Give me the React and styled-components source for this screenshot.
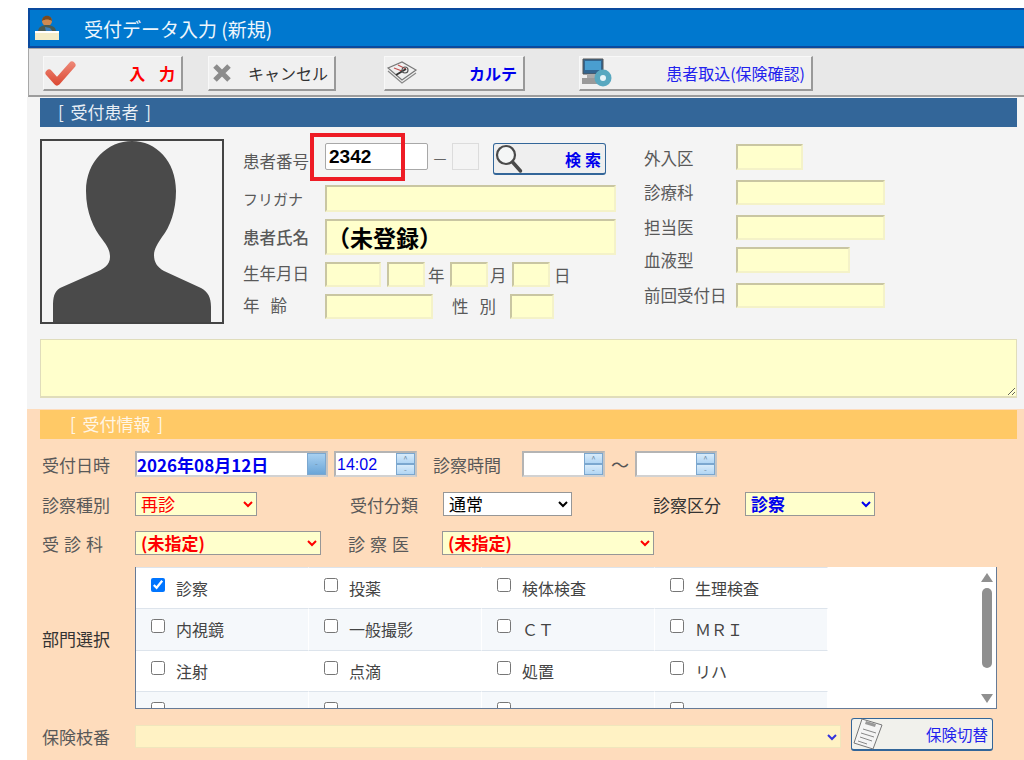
import React from "react";
import styled, { createGlobalStyle } from "styled-components";

const CJK = `"Noto Sans CJK JP", "Noto Sans", sans-serif`;

const GlobalStyle = createGlobalStyle`
  html, body {
    margin: 0;
    padding: 0;
    background: #fff;
    overflow: hidden;
  }
  body {
    font-family: ${CJK};
  }
`;

const Page = styled.div`
  width: 1024px;
  height: 760px;
  box-sizing: border-box;
  padding: 8px 0 0 28px;
  overflow: hidden;
`;

const TitleBar = styled.div`
  display: flex;
  align-items: center;
  height: 40px;
  box-sizing: border-box;
  background: #0078cf;
  border: 2px solid #0a4a9e;
  border-right: none;
  color: #eef6fc;
  font-size: 19px;
  padding-left: 4px;
`;

const TitleText = styled.span`
  margin-left: 24px;
  margin-top: 1px;
`;

const Toolbar = styled.div`
  display: flex;
  align-items: flex-start;
  height: 49px;
  box-sizing: border-box;
  padding: 7px 0 0 14px;
  background: #e8e8e8;
  border-top: 1px solid #a8a8a8;
  border-bottom: 2px solid #9c9c9c;
  border-left: 1px solid #a8a8a8;
`;

const ToolButton = styled.div`
  display: flex;
  align-items: center;
  justify-content: space-between;
  width: ${(p) => p.$w}px;
  height: 35px;
  box-sizing: border-box;
  margin-left: ${(p) => p.$ml || 0}px;
  padding: 0 6px 0 1px;
  background: #f0f0f0;
  border: 1px solid #f8f8f8;
  border-right: 2px solid #999;
  border-bottom: 2px solid #999;
  color: ${(p) => p.$color};
  font-size: 16px;
  font-weight: ${(p) => (p.$bold ? 700 : 400)};
  word-spacing: ${(p) => p.$wordGap || 0}px;
  white-space: nowrap;
`;

const PatientPanel = styled.div`
  margin-left: -1px;
  height: 312px;
  box-sizing: border-box;
  padding: 1px 7px 0 13px;
  background: #f4f4f4;
`;

const SectionHeader = styled.div`
  height: 29px;
  box-sizing: border-box;
  padding-bottom: 2px;
  display: flex;
  align-items: center;
  background: ${(p) => p.$bg};
  color: ${(p) => p.$color};
  font-size: 17px;
  word-spacing: 3px;
  padding-left: ${(p) => p.$pl}px;
  white-space: pre;
`;

const PatientBody = styled.div`
  display: flex;
  margin-top: 12px;
`;

const Photo = styled.div`
  width: 184px;
  height: 185px;
  box-sizing: border-box;
  border: 2px solid #444;
  background: #f4f4f4;
  flex: none;
  overflow: hidden;
  line-height: 0;
`;

const MainFields = styled.div`
  width: 401px;
  margin-left: 19px;
  flex: none;
`;

const SideFields = styled.div`
  flex: none;
`;

const Row = styled.div`
  display: flex;
  align-items: ${(p) => p.$align || "center"};
  height: ${(p) => p.$h}px;
  margin-top: ${(p) => p.$mt || 0}px;
`;

const Label = styled.span`
  display: inline-block;
  width: ${(p) => p.$w}px;
  margin-left: ${(p) => p.$ml || 0}px;
  margin-top: ${(p) => p.$top || 0}px;
  flex: none;
  font-size: ${(p) => p.$size || 16.5}px;
  color: ${(p) => p.$color || "#595959"};
  font-weight: ${(p) => (p.$bold ? 500 : 400)};
  letter-spacing: ${(p) => p.$spacing || 0}px;
  white-space: pre;
  line-height: 1;
`;

const YellowBox = styled.input`
  width: ${(p) => p.$w}px;
  height: ${(p) => p.$h || 25}px;
  margin-left: ${(p) => p.$ml || 0}px;
  box-sizing: border-box;
  flex: none;
  padding: 0;
  background: #ffffcc;
  border: 2px solid #f4f2c8;
  border-top-color: #c9c6a2;
  border-left-color: #c9c6a2;
  color: #000;
  font-family: ${CJK};
  font-size: ${(p) => p.$size || 16}px;
  font-weight: 700;
  outline: none;
`;

const NumberWrap = styled.div`
  position: relative;
  flex: none;
  line-height: 0;
`;

const NumberInput = styled.input`
  width: 103px;
  height: 27px;
  box-sizing: border-box;
  padding: 0 0 0 3px;
  background: #fff;
  border: 1px solid #a8a8a8;
  border-radius: 2px;
  color: #000;
  font-family: "Liberation Sans", Arial, sans-serif;
  font-size: 19px;
  font-weight: 700;
  outline: none;
`;

const Highlight = styled.div`
  position: absolute;
  left: -15px;
  top: -10px;
  width: 95px;
  height: 48px;
  box-sizing: border-box;
  border: 4px solid #ee1c25;
`;

const Dash = styled.span`
  width: 24px;
  flex: none;
  text-align: center;
  color: #666;
  font-size: 16px;
  line-height: 30px;
`;

const SubInput = styled.div`
  width: 27px;
  height: 27px;
  box-sizing: border-box;
  flex: none;
  background: #f4f4f4;
  border: 1px solid #dcdcdc;
`;

const SearchButton = styled.div`
  display: flex;
  align-items: center;
  justify-content: space-between;
  width: 113px;
  height: 32px;
  margin-left: 14px;
  box-sizing: border-box;
  flex: none;
  padding: 0 0 0 1px;
  background: #efefef;
  border: 1px solid #336699;
  border-bottom-width: 2px;
  border-radius: 3px;
  color: #0000ee;
  font-size: 16px;
  font-weight: 700;
  letter-spacing: 4px;
`;

const Notes = styled.textarea`
  display: block;
  width: 977px;
  height: 59px;
  margin-top: 15px;
  box-sizing: border-box;
  background: #ffffcc;
  border: 1px solid #e0ddbb;
  border-bottom-width: 2px;
  outline: none;
  resize: vertical;
`;

const ReceptionPanel = styled.div`
  margin-left: -1px;
  height: 352px;
  box-sizing: border-box;
  padding: 1px 7px 0 13px;
  background: #fedcbc;
`;

const FormRow = styled.div`
  display: flex;
  align-items: ${(p) => p.$align || "center"};
  height: ${(p) => p.$h}px;
  margin-top: ${(p) => p.$mt}px;
  margin-left: 2px;
`;

const Field = styled.div`
  display: flex;
  width: ${(p) => p.$w}px;
  height: 26px;
  margin-left: ${(p) => p.$ml || 0}px;
  box-sizing: border-box;
  flex: none;
  background: #fff;
  border: 2px solid #b4b4b4;
  border-right-color: #c4c4c4;
  border-bottom-color: #d2d2d2;
`;

const FieldText = styled.span`
  flex: 1;
  padding-left: ${(p) => p.$pl || 0}px;
  color: #0000ee;
  font-family: ${(p) => (p.$bold ? CJK : `"Liberation Sans", Arial, sans-serif`)};
  font-size: ${(p) => (p.$bold ? 17 : 16)}px;
  font-weight: ${(p) => (p.$bold ? 700 : 400)};
  line-height: 24px;
  white-space: nowrap;
`;

const SpinColumn = styled.div`
  display: flex;
  flex-direction: column;
  width: 19px;
  flex: none;
`;

const SpinPart = styled.div`
  flex: 1;
  display: flex;
  align-items: center;
  justify-content: center;
  background: ${(p) => (p.$dark ? "linear-gradient(#a8d0f0, #6ba6d8)" : "linear-gradient(#d8ebfa, #b2d6f4)")};
  border: 1px solid #7ba7cf;
  color: #6f8ba5;
  font-size: 8px;
  line-height: 1;
`;

const Tilde = styled.span`
  width: 30px;
  text-align: center;
  flex: none;
  color: #555;
  font-size: 18px;
`;

/* the frame clips a taller select, Noto's line box does not fit in 24px */
const PickerFrame = styled.div`
  display: flex;
  align-items: center;
  width: ${(p) => p.$w}px;
  height: ${(p) => p.$h || 24}px;
  margin-left: ${(p) => p.$ml || 0}px;
  margin-top: ${(p) => p.$top || 0}px;
  box-sizing: border-box;
  flex: none;
  overflow: hidden;
  background-color: ${(p) => p.$bg || "#ffffcc"};
  border: 1px solid ${(p) => p.$border || "#979797"};
`;

const Picker = styled.select`
  width: 100%;
  height: 32px;
  flex: none;
  margin: 0;
  padding: 0 0 2px 1px;
  background: transparent;
  border: none;
  color: ${(p) => p.$color || "#ff0000"};
  font-family: ${CJK};
  font-size: 17px;
  font-weight: ${(p) => (p.$bold ? 700 : 400)};
  outline: none;
`;

const ListBox = styled.div`
  display: flex;
  justify-content: space-between;
  width: 862px;
  height: 142px;
  box-sizing: border-box;
  background: #fff;
  border-left: 1px solid #667a96;
  border-right: 1px solid #667a96;
  border-bottom: 1px solid #667a96;
  overflow: hidden;
`;

const ListGrid = styled.div`
  display: grid;
  grid-template-columns: repeat(4, 173px);
  grid-auto-rows: 41.4px;
  width: 692px;
  flex: none;
`;

const ListCell = styled.label`
  display: flex;
  align-items: flex-start;
  box-sizing: border-box;
  padding: 10px 0 0 15px;
  background: ${(p) => (p.$alt ? "#f5f8fb" : "#fff")};
  border-top: 1px solid #dde4ec;
  border-right: 1px solid #fff;
  color: #444;
  font-size: 16px;
  line-height: 1;
`;

const CellCheck = styled.input`
  width: 14px;
  height: 14px;
  margin: 0 11px 0 0;
  flex: none;
`;

const CellText = styled.span`
  margin-top: 2px;
`;

const ScrollTrack = styled.div`
  display: flex;
  flex-direction: column;
  align-items: center;
  width: 14px;
  margin-right: 2px;
  padding-top: 6px;
  flex: none;
`;

const ScrollArrow = styled.div`
  width: 0;
  height: 0;
  border-left: 6px solid transparent;
  border-right: 6px solid transparent;
  ${(p) => (p.$down ? "border-top: 9px solid #909090;" : "border-bottom: 9px solid #909090;")}
`;

const ScrollThumb = styled.div`
  width: 10px;
  height: 80px;
  margin: 6px 0 26px;
  border-radius: 5px;
  background: #8f8f8f;
`;

const SwapButton = styled.div`
  display: flex;
  align-items: center;
  justify-content: space-between;
  width: 142px;
  height: 33px;
  margin-left: 10px;
  box-sizing: border-box;
  flex: none;
  padding: 0 4px 0 1px;
  background: #f1f1ec;
  border: 1px solid #336699;
  border-bottom-width: 2px;
  border-radius: 3px;
  color: #1f1fee;
  font-size: 15.5px;
`;

function Dropdown({ w, h, ml, top, bg, border, color, bold, value }) {
  return (
    <PickerFrame $w={w} $h={h} $ml={ml} $top={top} $bg={bg} $border={border}>
      <Picker $color={color} $bold={bold} value={value} onChange={() => {}}>
        <option>{value}</option>
      </Picker>
    </PickerFrame>
  );
}

function ReceptionIcon() {
  return (
    <svg width="26" height="26" viewBox="0 0 26 26">
      <circle cx="13" cy="6" r="5" fill="#d08a50" />
      <path d="M8 6c0-7 10-7 10 0-3-2-7-2-10 0z" fill="#7a4a1e" />
      <path d="M4 17c0-5 4-7 9-7s9 2 9 7z" fill="#4a5a50" />
      <path d="M11 12l5 1 3 4h-7z" fill="#3d7fbb" />
      <path d="M1 16h24v9H1z" fill="#f3ecc8" />
      <path d="M1 16h24v2H1z" fill="#fff" />
    </svg>
  );
}

function CheckIcon() {
  return (
    <svg width="32" height="28" viewBox="0 0 32 28">
      <defs>
        <linearGradient id="checkRed" gradientUnits="userSpaceOnUse" x1="0" y1="2" x2="0" y2="26">
          <stop offset="0" stopColor="#ee8a7a" />
          <stop offset="1" stopColor="#dc4a34" />
        </linearGradient>
      </defs>
      <path
        d="M4 14l8 9L27 6"
        fill="none"
        stroke="url(#checkRed)"
        strokeWidth="7"
        strokeLinecap="round"
        strokeLinejoin="round"
      />
    </svg>
  );
}

function CrossIcon() {
  return (
    <svg width="24" height="24" viewBox="0 0 24 24">
      <path d="M5 5l14 14M19 5L5 19" stroke="#8c8c8c" strokeWidth="5" fill="none" />
    </svg>
  );
}

function ChartIcon() {
  return (
    <svg width="32" height="26" viewBox="0 0 32 26">
      <path d="M2 8l14-6 14 8-14 10z" fill="#f0f0f0" stroke="#777" strokeWidth="1.200" />
      <path d="M2 11l14 12 14-10" fill="none" stroke="#888" strokeWidth="1.200" />
      <path d="M8 8l8 3M12 5l8 4" stroke="#c05050" strokeWidth="1.200" />
      <path d="M10 15l10-6" stroke="#333" strokeWidth="2" />
      <circle cx="19" cy="10" r="3" fill="none" stroke="#555" strokeWidth="1.200" />
    </svg>
  );
}

function ComputerIcon() {
  return (
    <svg width="32" height="30" viewBox="0 0 32 30">
      <path d="M2 1h20v15H2z" fill="#33658f" stroke="#555" />
      <path d="M4 3h16v9H4z" fill="#4a9ed0" />
      <path d="M1 20h18v6H1z" fill="#9a9a9a" />
      <path d="M6 16h8v4H6z" fill="#aaa" />
      <circle cx="22" cy="20" r="8.500" fill="#58a8c0" />
      <circle cx="22" cy="20" r="3" fill="#e8f4f8" />
    </svg>
  );
}

function LoupeIcon() {
  return (
    <svg width="28" height="30" viewBox="0 0 28 30">
      <circle cx="11" cy="11" r="9" fill="#f4f6f6" stroke="#4a4a4a" strokeWidth="2.200" />
      <path d="M17.500 18l8 9" stroke="#4a4a4a" strokeWidth="3.500" strokeLinecap="round" />
    </svg>
  );
}

function ClipboardIcon() {
  return (
    <svg width="30" height="32" viewBox="0 0 30 32">
      <path d="M9 1l20 6-9 24L1 25z" fill="#f4f4f4" stroke="#777" />
      <path d="M13 3l10 3-1 3-10-3z" fill="#999" />
      <path d="M10 11l13 4M8 15l13 4M7 19l12 4M5 23l9 3" stroke="#888" strokeWidth="1" />
    </svg>
  );
}

function Silhouette() {
  return (
    <svg width="180" height="181" viewBox="0 0 180 181">
      <path
        fill="#4a4a4a"
        d="M90 0C66 0 44 20 44 50C44 72 52 88 60 98C66 106 68 110 68 116C68 124 62 128 52 132L18 147C12 151 11 156 11 166V181H169V166C169 156 166 151 159 147L122 130C115 126 112 121 112 114C112 108 116 102 120 96C128 86 134 70 134 50C134 20 114 0 90 0z"
      />
    </svg>
  );
}

const listRows = [
  ["診察", "投薬", "検体検査", "生理検査"],
  ["内視鏡", "一般撮影", "ＣＴ", "ＭＲＩ"],
  ["注射", "点滴", "処置", "リハ"],
  ["", "", "", ""],
];

export default function App() {
  return (
    <Page>
      <GlobalStyle />
      <TitleBar>
        <ReceptionIcon />
        <TitleText>受付データ入力 (新規)</TitleText>
      </TitleBar>
      <Toolbar>
        <ToolButton $w={140} $color="#ff0000" $bold $wordGap={10}>
          <CheckIcon />
          <span>入 力</span>
        </ToolButton>
        <ToolButton $w={128} $ml={25} $color="#333">
          <CrossIcon />
          <span>キャンセル</span>
        </ToolButton>
        <ToolButton $w={141} $ml={48} $color="#0000ee" $bold>
          <ChartIcon />
          <span>カルテ</span>
        </ToolButton>
        <ToolButton $w={234} $ml={54} $color="#2222ee">
          <ComputerIcon />
          <span>患者取込(保険確認)</span>
        </ToolButton>
      </Toolbar>

      <PatientPanel>
        <SectionHeader $bg="#336699" $color="#e8eef5" $pl={18}>[ 受付患者 ]</SectionHeader>
        <PatientBody>
          <Photo>
            <Silhouette />
          </Photo>
          <MainFields>
            <Row $h={27} $mt={4} $align="flex-start">
              <Label $w={82} $top={10}>患者番号</Label>
              <NumberWrap>
                <NumberInput value="2342" readOnly />
                <Highlight />
              </NumberWrap>
              <Dash>－</Dash>
              <SubInput />
              <SearchButton>
                <LoupeIcon />
                <span>検索</span>
              </SearchButton>
            </Row>
            <Row $h={27} $mt={15}>
              <Label $w={82} $size={15}>フリガナ</Label>
              <YellowBox $w={291} $h={27} readOnly />
            </Row>
            <Row $h={36} $mt={7}>
              <Label $w={82} $bold>患者氏名</Label>
              <YellowBox $w={291} $h={36} $size={23} value="（未登録）" readOnly />
            </Row>
            <Row $h={25} $mt={7}>
              <Label $w={82} $top={-3}>生年月日</Label>
              <YellowBox $w={56} readOnly />
              <YellowBox $w={38} $ml={6} readOnly />
              <Label $w={22} $ml={3} $top={2}>年</Label>
              <YellowBox $w={38} readOnly />
              <Label $w={22} $ml={2} $top={2}>月</Label>
              <YellowBox $w={38} readOnly />
              <Label $w={18} $ml={4} $top={2}>日</Label>
            </Row>
            <Row $h={25} $mt={7}>
              <Label $w={82} $top={-2}>年   齢</Label>
              <YellowBox $w={108} readOnly />
              <Label $w={58} $ml={19}>性   別</Label>
              <YellowBox $w={44} readOnly />
            </Row>
          </MainFields>
          <SideFields>
            <Row $h={26} $mt={5}>
              <Label $w={92} $top={2}>外入区</Label>
              <YellowBox $w={67} $h={26} readOnly />
            </Row>
            <Row $h={25} $mt={10}>
              <Label $w={92}>診療科</Label>
              <YellowBox $w={149} readOnly />
            </Row>
            <Row $h={25} $mt={10}>
              <Label $w={92}>担当医</Label>
              <YellowBox $w={149} readOnly />
            </Row>
            <Row $h={26} $mt={7}>
              <Label $w={92}>血液型</Label>
              <YellowBox $w={114} $h={26} readOnly />
            </Row>
            <Row $h={25} $mt={10}>
              <Label $w={92}>前回受付日</Label>
              <YellowBox $w={149} readOnly />
            </Row>
          </SideFields>
        </PatientBody>
        <Notes readOnly />
      </PatientPanel>

      <ReceptionPanel>
        <SectionHeader $bg="#ffc966" $color="#fff6e6" $pl={30}>[ 受付情報 ]</SectionHeader>
        <FormRow $h={26} $mt={12}>
          <Label $w={93} $size={17}>受付日時</Label>
          <Field $w={193}>
            <FieldText $bold>2026年08月12日</FieldText>
            <SpinColumn>
              <SpinPart $dark>-</SpinPart>
            </SpinColumn>
          </Field>
          <Field $w={83} $ml={6}>
            <FieldText $pl={1}>14:02</FieldText>
            <SpinColumn>
              <SpinPart>^</SpinPart>
              <SpinPart>-</SpinPart>
            </SpinColumn>
          </Field>
          <Label $w={89} $ml={16} $size={17}>診察時間</Label>
          <Field $w={83}>
            <FieldText />
            <SpinColumn>
              <SpinPart>^</SpinPart>
              <SpinPart>-</SpinPart>
            </SpinColumn>
          </Field>
          <Tilde>〜</Tilde>
          <Field $w={82}>
            <FieldText />
            <SpinColumn>
              <SpinPart>^</SpinPart>
              <SpinPart>-</SpinPart>
            </SpinColumn>
          </Field>
        </FormRow>
        <FormRow $h={24} $mt={15}>
          <Label $w={93} $size={17}>診察種別</Label>
          <Dropdown w={122} value="再診" />
          <Label $w={93} $ml={93} $size={17}>受付分類</Label>
          <Dropdown w={129} bg="#fff" color="#000" value="通常" />
          <Label $w={92} $ml={81} $size={17} $color="#333">診察区分</Label>
          <Dropdown w={130} color="#0000ee" bold value="診察" />
        </FormRow>
        <FormRow $h={24} $mt={15}>
          <Label $w={93} $size={17} $spacing={5}>受診科</Label>
          <Dropdown w={186} bold value="(未指定)" />
          <Label $w={93} $ml={27} $size={17} $spacing={5}>診察医</Label>
          <Dropdown w={212} ml={1} bold value="(未指定)" />
        </FormRow>
        <FormRow $h={142} $mt={12}>
          <Label $w={93} $size={17} $color="#333">部門選択</Label>
          <ListBox>
            <ListGrid>
              {listRows.map((row, r) =>
                row.map((text, c) => (
                  <ListCell key={`${r}-${c}`} $alt={r % 2 === 1}>
                    <CellCheck type="checkbox" checked={r === 0 && c === 0} readOnly />
                    <CellText>{text}</CellText>
                  </ListCell>
                ))
              )}
            </ListGrid>
            <ScrollTrack>
              <ScrollArrow />
              <ScrollThumb />
              <ScrollArrow $down />
            </ScrollTrack>
          </ListBox>
        </FormRow>
        <FormRow $h={33} $mt={9}>
          <Label $w={93} $size={17} $top={4}>保険枝番</Label>
          <Dropdown w={706} h={23} top={4} bg="#fff2c4" color="#3333dd" border="#f0e6bc" value="" />
          <SwapButton>
            <ClipboardIcon />
            <span>保険切替</span>
          </SwapButton>
        </FormRow>
      </ReceptionPanel>
    </Page>
  );
}
